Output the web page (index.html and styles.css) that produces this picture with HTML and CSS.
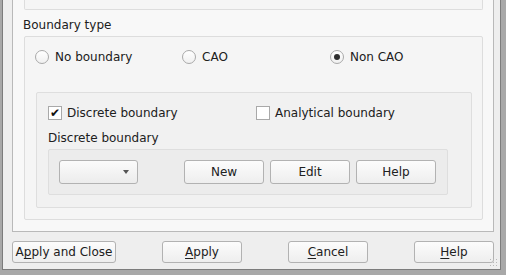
FILE: index.html
```html
<!doctype html>
<html lang="en">
<head>
	<meta charset="UTF-8">
	<title>Boundary type</title>
	<link rel="stylesheet" href="styles.css">
</head>
<body>
	<div class="window">
		<div class="panel">
			<div class="group group-top"></div>
			<div class="group-title">Boundary type</div>
			<div class="group boundary">
				<div class="radios">
					<label class="option"><span class="radio"></span>No boundary</label>
					<label class="option"><span class="radio"></span>CAO</label>
					<label class="option"><span class="radio checked"></span>Non CAO</label>
				</div>
				<div class="frame discrete">
					<div class="checks">
						<label class="option"><span class="check checked">&#10004;</span>Discrete boundary</label>
						<label class="option"><span class="check"></span>Analytical boundary</label>
					</div>
					<div class="sub-title">Discrete boundary</div>
					<div class="frame tools">
						<div class="combo"><span class="arrow"></span></div>
						<div class="tool-buttons">
							<button type="button" class="btn">New</button>
							<button type="button" class="btn">Edit</button>
							<button type="button" class="btn">Help</button>
						</div>
					</div>
				</div>
			</div>
		</div>
		<div class="actions">
			<button type="button" class="btn btn-wide">A<u>p</u>ply and Close</button>
			<button type="button" class="btn"><u>A</u>pply</button>
			<button type="button" class="btn"><u>C</u>ancel</button>
			<button type="button" class="btn"><u>H</u>elp</button>
		</div>
		<div class="grip"></div>
	</div>
</body>
</html>
```

FILE: styles.css
```css
*{
	margin:0;
	padding:0;
	box-sizing:border-box;
}
html, body{
	height:100%;
}
body{
	background-color:#a8a8a8;
	font-family:"DejaVu Sans", "Liberation Sans", sans-serif;
	font-size:12px;
	line-height:14px;
	color:#202020;
}
.window{
	position:relative;
	margin-left:2px;
	width:499px;
	height:270px;
	border:1px solid #7c7c7c;
	border-top:none;
	background-color:#eeeeee;
	overflow:hidden;
}
.panel{
	margin-left:9px;
	width:482px;
	padding:0 10px 11px 11px;
	border:1px solid #b9b9b9;
	border-top:none;
	background-color:#f8f8f8;
}
.group{
	border:1px solid #dddddd;
	border-radius:2px;
	background-color:#f5f5f5;
}
.group-top{
	height:10px;
	border-top:none;
	border-radius:0 0 2px 2px;
}
.group-title{
	margin:8px 0 4px -1px;
	height:14px;
}
.boundary{
	padding:13px 10px 11px 10px;
}
.radios{
	display:grid;
	grid-template-columns:147px 148px auto;
	height:14px;
}
.option{
	display:flex;
	align-items:center;
	height:14px;
	white-space:nowrap;
}
.radio{
	width:14px;
	height:14px;
	margin-right:6px;
	border:1px solid #a9a9a9;
	border-radius:50%;
	background:linear-gradient(#ffffff, #f0f0f0);
	display:flex;
	align-items:center;
	justify-content:center;
}
.radio.checked::after{
	content:"";
	width:6px;
	height:6px;
	border-radius:50%;
	background-color:#2e2e2e;
}
.frame{
	border:1px solid #dedede;
	border-radius:2px;
	background-color:#f1f1f1;
}
.discrete{
	margin:28px 0 0 1px;
	padding:13px 10px 12px 11px;
}
.checks{
	display:grid;
	grid-template-columns:208px auto;
	height:14px;
}
.check{
	width:14px;
	height:14px;
	margin-right:5px;
	border:1px solid #a9a9a9;
	background-color:#ffffff;
	font-size:12px;
	line-height:12px;
	text-align:center;
	color:#111;
	font-weight:bold;
}
.sub-title{
	margin:11px 0 4px;
	height:14px;
}
.tools{
	width:400px;
	padding:10px 11px 10px 10px;
	display:flex;
	align-items:center;
	justify-content:space-between;
	background-color:#ececec;
}
.combo{
	position:relative;
	width:79px;
	height:24px;
	border:1px solid #b2b2b2;
	border-radius:3px;
	background:linear-gradient(#fbfbfb, #ececec);
}
.combo .arrow{
	position:absolute;
	left:63px;
	top:9px;
	border:3px solid transparent;
	border-top:4px solid #555;
	border-bottom:none;
}
.tool-buttons{
	display:flex;
	gap:6px;
}
.tool-buttons .btn{
	height:24px;
}
.btn{
	width:80px;
	height:22px;
	border:1px solid #b2b2b2;
	border-radius:3px;
	background:linear-gradient(#fcfcfc, #eeeeee);
	font-family:inherit;
	font-size:12px;
	line-height:14px;
	color:#202020;
}
.btn u{
	text-decoration-thickness:1px;
	text-underline-offset:2px;
}
.btn-wide{
	width:104px;
}
.actions{
	margin:9px 6px 0 9px;
	display:flex;
	justify-content:space-between;
}
.grip{
	position:absolute;
	right:1px;
	bottom:1px;
	width:10px;
	height:10px;
	background-image:radial-gradient(#b8b8b8 40%, transparent 45%);
	background-size:3px 3px;
}
```
